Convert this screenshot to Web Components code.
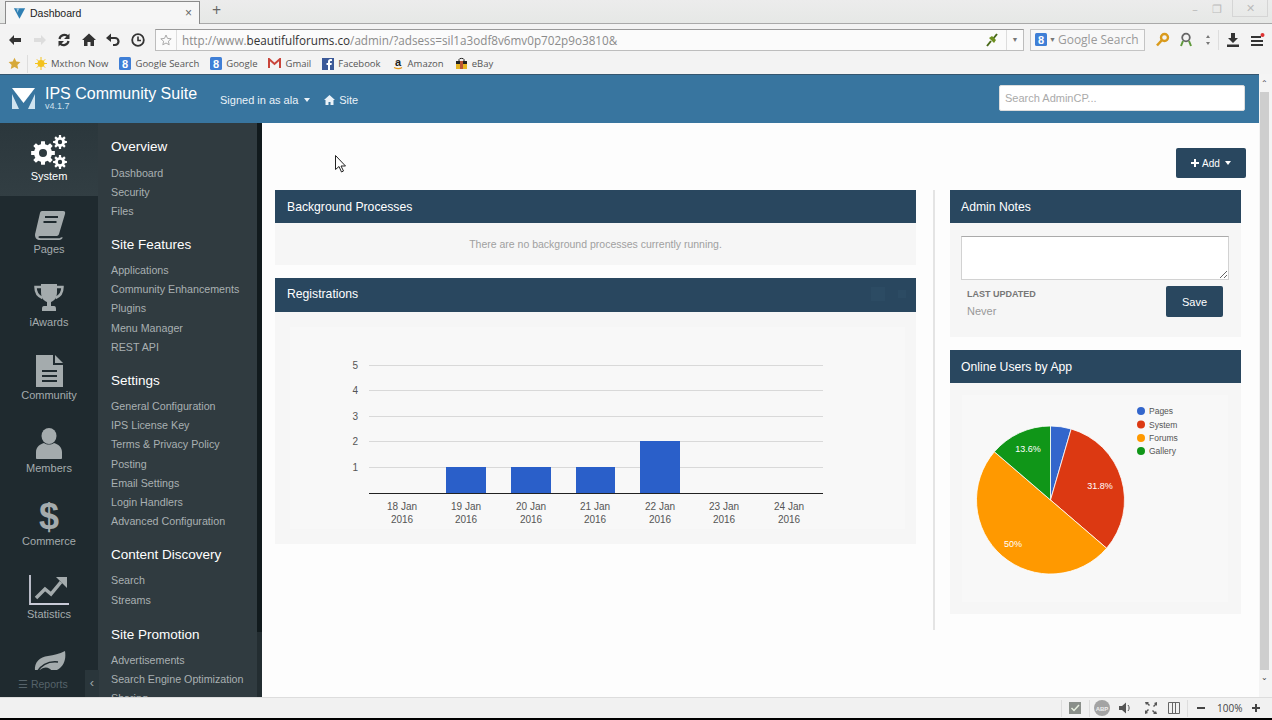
<!DOCTYPE html>
<html>
<head>
<meta charset="utf-8">
<title>Dashboard</title>
<style>
  html, body { margin: 0; height: 720px; overflow: hidden; background: #000; }
  body { display: flex; flex-direction: column; font-family: "Liberation Sans", Arial, sans-serif; }
</style>
</head>
<body>
<browser-chrome></browser-chrome>
<acp-shell>
  <acp-header slot="header"></acp-header>
  <acp-sidebar slot="sidebar"></acp-sidebar>
  <acp-dashboard></acp-dashboard>
</acp-shell>
<browser-status></browser-status>
<mouse-cursor></mouse-cursor>

<script>
function define(name, html) {
  const template = document.createElement('template');
  template.innerHTML = html;
  customElements.define(name, class extends HTMLElement {
    constructor() {
      super();
      this.attachShadow({ mode: 'open' });
      this.shadowRoot.appendChild(template.content.cloneNode(true));
    }
  });
}

function gearPath(cx, cy, outer, root, hole, teeth) {
  let d = '';
  const step = Math.PI * 2 / teeth;
  for (let i = 0; i < teeth; i++) {
    const a = i * step;
    const pts = [[root, a - step * .5], [root, a - step * .3], [outer, a - step * .2], [outer, a + step * .2], [root, a + step * .3]];
    pts.forEach((p, j) => {
      const x = (cx + p[0] * Math.cos(p[1])).toFixed(2);
      const y = (cy + p[0] * Math.sin(p[1])).toFixed(2);
      d += (i === 0 && j === 0 ? 'M' : 'L') + x + ' ' + y;
    });
  }
  d += `Z M${cx - hole} ${cy}a${hole} ${hole} 0 1 0 ${hole * 2} 0a${hole} ${hole} 0 1 0 ${-hole * 2} 0Z`;
  return d;
}

const gIcon = `<svg width="12" height="13" viewBox="0 0 12 13"><rect width="12" height="13" rx="1.5" fill="#3f7fd6"/><text x="6" y="10.5" font-size="11" font-weight="700" text-anchor="middle" fill="#fff" font-family="Liberation Sans">8</text></svg>`;

define('browser-chrome', `
<style>
  :host { display: block; height: 74px; flex: none; background: #f3f3f3; font-family: "Open Sans", sans-serif; color: #444; }
  svg { display: block; flex: none; }
  .tabs { height: 23px; display: flex; align-items: flex-end; background: linear-gradient(#ececec, #e6e8e6); border-bottom: 1px solid #a9a9a9; position: relative; }
  .tab { margin-left: 5px; width: 195px; height: 23px; box-sizing: border-box; border: 1px solid #8b8b8b; border-bottom: 0; background: #f6f6f6; display: flex; align-items: center; padding: 0 7px 0 7px; font: 10.5px "Liberation Sans", sans-serif; color: #222; margin-bottom: -1px; }
  .tab span { margin-left: 4px; flex: 1; }
  .tab b { font-weight: 400; font-size: 12px; color: #666; }
  .plus { margin-left: 12px; font-size: 16px; line-height: 20px; color: #666; height: 23px; }
  .win { margin-left: auto; display: flex; align-items: center; height: 17px; align-self: flex-start; color: #bbb; font-size: 11px; }
  .win i { font-style: normal; width: 22px; text-align: center; }
  .win .close { width: 36px; height: 17px; border: 1px solid #d5d5d5; border-top: 0; margin: 0 4px 0 4px; line-height: 15px; box-sizing: border-box; }
  .nav { height: 29px; padding-top: 2px; display: flex; align-items: center; box-sizing: border-box; }
  .nav .btns { width: 155px; display: flex; flex: none; padding-left: 7px; box-sizing: border-box; gap: 8.6px; }
  .addr { width: 869px; height: 22px; box-sizing: border-box; border: 1px solid #bdbdbd; border-top-color: #999; background: #fbfbfb; display: flex; align-items: center; font-size: 11.7px; color: #8b8b8b; }
  .addr .star { width: 20px; flex: none; border-right: 1px solid #ddd; height: 100%; display: flex; align-items: center; justify-content: center; }
  .addr .url { margin-left: 5px; flex: 1; white-space: nowrap; }
  .addr .url em { font-style: normal; color: #333; }
  .addr .plug { width: 28px; display: flex; justify-content: center; }
  .addr .drop { width: 16px; height: 100%; border-left: 1px solid #ddd; display: flex; align-items: center; justify-content: center; color: #777; font-size: 7px; }
  .search { margin-left: 6px; width: 115px; height: 22px; box-sizing: border-box; border: 1px solid #c4c4c4; background: #f8f8f8; display: flex; align-items: center; padding-left: 4px; color: #9a9a9a; font-size: 12px; white-space: nowrap; }
  .search .c { font-size: 7px; margin: 0 2px 0 2px; color: #777; }
  .tools { display: flex; align-items: center; margin-left: 9px; }
  .tools .sep { width: 1px; height: 20px; background: #ddd; margin: 0 6px 0 7px; }
  .marks { height: 21px; display: flex; align-items: center; font-size: 9.5px; color: #555; padding-left: 8px; box-sizing: border-box; }
  .marks .sep { width: 1px; height: 18px; background: #ddd; margin: 0 7px 0 6px; }
  .marks a { display: flex; align-items: center; gap: 4px; margin-right: 11px; white-space: nowrap; }
</style>
<div class="tabs">
  <div class="tab">
    <svg width="13" height="13" viewBox="0 0 15 14"><path d="M1 1h13L7.500 13z" fill="#2f7fb3"/><path d="M4 1h3.500L5 6z" fill="#9cc5de"/></svg>
    <span>Dashboard</span><b>×</b>
  </div>
  <div class="plus">+</div>
  <div class="win"><i>–</i><i>❐</i><i class="close">✕</i></div>
</div>
<div class="nav">
  <div class="btns">
    <svg width="16" height="16" viewBox="0 0 16 16"><path d="M2 8l5-5v3h7v4H7v3z" fill="#333"/></svg>
    <svg width="16" height="16" viewBox="0 0 16 16"><path d="M14 8L9 3v3H2v4h7v3z" fill="#ddd"/></svg>
    <svg width="16" height="16" viewBox="0 0 16 16"><path d="M3.500 7a5 5 0 0 1 8.500-2.500M12.500 9A5 5 0 0 1 4 11.500" fill="none" stroke="#333" stroke-width="2.200"/><path d="M13.500 1.500V7H8zM2.500 14.500V9H8z" fill="#333"/></svg>
    <svg width="16" height="16" viewBox="0 0 16 16"><path d="M8 1.500L1 8h2v6h3.500v-4h3v4H13V8h2z" fill="#333"/></svg>
    <svg width="16" height="16" viewBox="0 0 16 16"><path d="M4 6h6a3.500 3.500 0 0 1 0 7H8" fill="none" stroke="#333" stroke-width="2.200"/><path d="M6 1.500V10L1 6z" fill="#333"/></svg>
    <svg width="16" height="16" viewBox="0 0 16 16"><circle cx="8" cy="8" r="5.800" fill="none" stroke="#333" stroke-width="1.800"/><path d="M8 4.500V8.500H11" fill="none" stroke="#333" stroke-width="1.600"/></svg>
  </div>
  <div class="addr">
    <div class="star"><svg width="12" height="12" viewBox="0 0 12 12"><path d="M6 1l1.500 3.400 3.700.4-2.800 2.400.8 3.600L6 9l-3.200 1.800.8-3.600L.8 4.800l3.700-.4z" fill="none" stroke="#aaa"/></svg></div>
    <div class="url">http://www.<em>beautifulforums.co</em>/admin/?adsess=sil1a3odf8v6mv0p702p9o3810&amp;</div>
    <div class="plug"><svg width="14" height="14" viewBox="0 0 14 14"><path d="M2 13L6 8M8 6l4-5" stroke="#4a6a1a" stroke-width="2"/><path d="M4 5l5 5 2-3-4-4z" fill="#6d8f1f"/></svg></div>
    <div class="drop">▼</div>
  </div>
  <div class="search">${gIcon}<span class="c">▼</span>Google Search</div>
  <div class="tools">
    <svg width="16" height="16" viewBox="0 0 16 16" style="margin-right:8px"><circle cx="10.500" cy="5.500" r="3.500" fill="none" stroke="#d99a1c" stroke-width="2.400"/><path d="M8 8l-5 5.500" stroke="#d99a1c" stroke-width="2.600"/></svg>
    <svg width="16" height="16" viewBox="0 0 16 16" style="margin-right:11px"><circle cx="8" cy="5.500" r="3.800" fill="none" stroke="#666" stroke-width="1.800"/><path d="M5 9l-2 5M11 9l2 5" stroke="#5f9a3c" stroke-width="2"/></svg>
    <svg width="6" height="16" viewBox="0 0 6 16"><path d="M1 6h4L3 3zM1 10h4l-2 3z" fill="#777"/></svg>
    <span class="sep"></span>
    <svg width="16" height="16" viewBox="0 0 16 16" style="margin-right:8px"><path d="M6 1h4v5h3l-5 5-5-5h3zM2 12.500h12V15H2z" fill="#333"/></svg>
    <svg width="16" height="16" viewBox="0 0 16 16"><path d="M2 4h10v2H2zM2 8h12v2H2zM2 12h12v2H2z" fill="#333"/><circle cx="13.500" cy="3" r="2" fill="#d33"/></svg>
  </div>
</div>
<div class="marks">
  <svg width="13" height="13" viewBox="0 0 13 13"><path d="M6.500 .8l1.800 3.800 4.100.5-3 2.900.8 4.100-3.700-2-3.700 2 .8-4.100-3-2.900 4.100-.5z" fill="#d6a93a"/></svg>
  <span class="sep"></span>
  <a style="letter-spacing:.05px"><svg width="12" height="13" viewBox="0 0 12 13"><circle cx="6" cy="6.500" r="3.500" fill="#f3c21c"/><path d="M6 0v13M0 6.500h12M1.800 2.300l8.400 8.400M10.200 2.300l-8.400 8.400" stroke="#f3c21c"/></svg>Mxthon Now</a>
  <a>${gIcon}Google Search</a>
  <a>${gIcon}Google</a>
  <a><svg width="13" height="11" viewBox="0 0 13 11"><path d="M1 10V1l5.500 5L12 1v9" fill="none" stroke="#c9443a" stroke-width="2"/></svg>Gmail</a>
  <a><svg width="12" height="12" viewBox="0 0 12 12"><rect width="12" height="12" fill="#3b5998"/><path d="M8 12V7h1.500l.3-2H8V4c0-.6.2-1 1-1h1V1.200C9.500 1.100 9 1 8.500 1 7 1 6 2 6 3.600V5H4.500v2H6v5z" fill="#fff"/></svg>Facebook</a>
  <a><svg width="12" height="13" viewBox="0 0 12 13"><text x="6" y="9" font-size="11" font-weight="700" text-anchor="middle" fill="#222" font-family="Liberation Sans">a</text><path d="M2 10.500c3 1.500 6 1.500 8 0" stroke="#e59a1c" fill="none" stroke-width="1.200"/></svg>Amazon</a>
  <a><svg width="13" height="13" viewBox="0 0 13 13"><path d="M4 4V2.500C4 1 9 1 9 2.500V4" fill="none" stroke="#222"/><path d="M1 4h11v3H1z" fill="#222"/><path d="M1 7h11v5H1z" fill="#e6b422"/><path d="M5 4h3v8H5z" fill="#b53"/></svg>eBay</a>
</div>
`);

define('acp-shell', `
<style>
  :host { display: grid; grid-template-columns: 262px 997px 13px; grid-template-rows: 49px 574px; flex: none; height: 623px; overflow: hidden; }
  .h { grid-column: 1 / 3; display: block; }
  .s { min-height: 0; overflow: hidden; }
  .m { background: #fdfdfd; overflow: hidden; }
  .bar { grid-column: 3; grid-row: 1 / 3; background: #f4f4f4; display: flex; flex-direction: column; box-sizing: border-box; padding: 5px 3px 0 1px; font-size: 8px; line-height: 10px; color: #444; text-align: center; }
  .thumb { margin: 3px 0; height: 578px; background: #cecece; }
</style>
<div class="h"><slot name="header"></slot></div>
<div class="s"><slot name="sidebar"></slot></div>
<div class="m"><slot></slot></div>
<div class="bar"><span>⌃</span><div class="thumb"></div><span>⌄</span></div>
`);

define('acp-header', `
<style>
  :host { display: flex; align-items: center; height: 49px; box-sizing: border-box; background: #38759f; border-top: 1px solid #35566f; color: #fff; }
  .logo { margin-left: 12px; margin-top: -2px; width: 23px; flex: none; }
  .brand { margin-left: 10px; width: 175px; flex: none; position: relative; top: -1px; }
  .brand b { display: block; font-weight: 400; font-size: 16px; line-height: 17px; white-space: nowrap; margin-top: -1px; }
  .brand small { display: block; font-size: 9px; line-height: 9px; color: #cfe0ec; }
  .user { font-size: 11px; color: #eaf2f8; margin-top: 1px; display: flex; align-items: center; gap: 4px; white-space: nowrap; }
  .caret { border: 3.500px solid transparent; border-top: 4px solid #eaf2f8; border-bottom: 0; margin-left: 2px; }
  .link { margin-left: 14px; }
  input { margin-left: auto; margin-right: 14px; margin-top: -2px; width: 246px; height: 26px; box-sizing: border-box; border: 1px solid #ddd; background: #fff; padding: 0 5px; font: 11px "Liberation Sans", sans-serif; border-radius: 2px; }
  input::placeholder { color: #aaa; opacity: 1; }
</style>
<svg class="logo" width="23" height="23" viewBox="0 0 23 23"><path d="M0 1h23L11.500 16z" fill="#fff"/><path d="M0 7l7 15H0zM23 7l-7 15h7z" fill="#cfe3ef"/></svg>
<div class="brand"><b>IPS Community Suite</b><small>v4.1.7</small></div>
<div class="user">Signed in as ala <span class="caret"></span></div>
<div class="user link">
  <svg width="11" height="10" viewBox="0 0 11 10"><path d="M5.500 0L0 5h1.500v5h3V7h2v3h3V5H11z" fill="#eaf2f8"/></svg>Site
</div>
<input placeholder="Search AdminCP...">
`);

define('side-app', `
<style>
  :host { display: flex; flex-direction: column; align-items: center; height: 73px; box-sizing: border-box; padding-top: 12px; color: #a4abad; font-size: 11px; line-height: 14px; }
  :host([active]) { background: linear-gradient(#2b373c, #323e43); color: #fff; }
  ::slotted(svg) { display: block; width: 40px; height: 34px; }
  ::slotted(span) { display: block; height: 34px; font-size: 36px; line-height: 34px; font-weight: 700; }
</style>
<slot name="icon"></slot>
<slot></slot>
`);

define('menu-group', `
<style>
  :host { display: block; margin-bottom: 14px; }
  .head { font-size: 13.500px; line-height: 20px; color: #fff; padding-bottom: 6.500px; }
  ::slotted(a) { display: block; font-size: 10.700px; line-height: 19.100px; color: #a9b0b2; white-space: nowrap; }
</style>
<div class="head"><slot name="head"></slot></div>
<slot></slot>
`);

define('acp-sidebar', `
<style>
  :host { display: grid; grid-template-columns: 98px 159px 5px; height: 574px; overflow: hidden; position: relative; background: #303b40; }
  .apps { background: #1f2a2f; overflow: hidden; }
  .menu { padding: 14px 0 0 13px; overflow: hidden; }
  .rail { background: #232d31; }
  .rail div { height: 509px; background: #111a1d; }
  .foot { position: absolute; left: 0; bottom: 0; width: 98px; height: 27px; background: #1f2a2f; display: flex; align-items: center; font-size: 10.500px; color: #56636a; box-sizing: border-box; padding-left: 18px; gap: 3px; }
  .collapse { position: absolute; left: 85px; bottom: 0; width: 14px; height: 27px; background: #2a363b; color: #9aa4a8; font-size: 13px; line-height: 25px; text-align: center; }
</style>
<div class="apps">
  <side-app active>
    <svg slot="icon" viewBox="0 0 40 34"><path fill="#fff" fill-rule="evenodd" d="${gearPath(14, 18, 12, 9, 4, 8)}"/><path fill="#fff" fill-rule="evenodd" d="${gearPath(31, 7, 7, 5, 2.2, 8)}"/><path fill="#fff" fill-rule="evenodd" d="${gearPath(31, 27, 7, 5, 2.2, 8)}"/></svg>
    System
  </side-app>
  <side-app>
    <svg slot="icon" viewBox="0 0 40 34"><path fill="#a4abad" d="M13 3h21c2 0 2.500 1 2 3l-6 20c-.5 1.500-1.500 2-3 2H12c-2 0-3 .6-2.500 1.400.3.500 1 .8 2 .8h19c1 0 1.800-.4 2.200-1.200l1 .6c-.4 1.500-1.800 2.400-3.500 2.400H11c-3 0-5-2-5-5 0-1 .2-1.500.4-2.200L11 5c.3-1.200 1-2 2-2z"/><path d="M16 9h13M14.500 14h13" stroke="#1f2a2f" stroke-width="2"/></svg>
    Pages
  </side-app>
  <side-app>
    <svg slot="icon" viewBox="0 0 40 34"><path fill="#a4abad" d="M12 3h16v8c0 6-3 9-6 10v4h3c1.500 0 2 1 2 3v2H13v-2c0-2 .5-3 2-3h3v-4c-3-1-6-4-6-10z"/><path fill="none" stroke="#a4abad" stroke-width="2.500" d="M12 6H6.500c0 6 2 9 7 11M28 6h5.500c0 6-2 9-7 11"/></svg>
    iAwards
  </side-app>
  <side-app>
    <svg slot="icon" viewBox="0 0 40 34"><path fill="#a4abad" d="M7 1h17v10h10v22H7z"/><path fill="#a4abad" d="M26 1l8 8h-8z"/><path d="M13 17h15M13 22h15M13 27h15" stroke="#1f2a2f" stroke-width="2"/></svg>
    Community
  </side-app>
  <side-app>
    <svg slot="icon" viewBox="0 0 40 34"><ellipse cx="20" cy="9" rx="7.500" ry="8" fill="#a4abad"/><path fill="#a4abad" d="M7 31v-6c0-5 4-8 8-9 3 2 7 2 10 0 4 1 8 4 8 9v6c0 .6-.5 1-1 1H8c-.5 0-1-.4-1-1z"/></svg>
    Members
  </side-app>
  <side-app>
    <span slot="icon">$</span>
    Commerce
  </side-app>
  <side-app>
    <svg slot="icon" viewBox="0 0 40 34"><path d="M1 2v29h39" fill="none" stroke="#c9cbd8" stroke-width="1.800"/><path d="M7 25l9-9 6 5 10-12" fill="none" stroke="#a4abad" stroke-width="3.500"/><path d="M27 4h11v11z" fill="#a4abad"/></svg>
    Statistics
  </side-app>
  <side-app>
    <svg slot="icon" viewBox="0 0 40 34"><path fill="#a4abad" d="M6 25c-1-9 5-14 13-15 6-1 11-2 17-5 1 6 0 12-4 16-3 3-6 4-9 4-3-4-8-5-13 0z"/><path d="M8 26c5-8 12-11 21-10" fill="none" stroke="#1f2a2f" stroke-width="1.500"/></svg>
  </side-app>
</div>
<div class="menu">
  <menu-group><span slot="head">Overview</span><a>Dashboard</a><a>Security</a><a>Files</a></menu-group>
  <menu-group><span slot="head">Site Features</span><a>Applications</a><a>Community Enhancements</a><a>Plugins</a><a>Menu Manager</a><a>REST API</a></menu-group>
  <menu-group><span slot="head">Settings</span><a>General Configuration</a><a>IPS License Key</a><a>Terms &amp; Privacy Policy</a><a>Posting</a><a>Email Settings</a><a>Login Handlers</a><a>Advanced Configuration</a></menu-group>
  <menu-group><span slot="head">Content Discovery</span><a>Search</a><a>Streams</a></menu-group>
  <menu-group style="margin-top:15px"><span slot="head">Site Promotion</span><a>Advertisements</a><a>Search Engine Optimization</a><a>Sharing</a></menu-group>
</div>
<div class="rail"><div></div></div>
<div class="foot">☰ Reports</div>
<div class="collapse">‹</div>
`);

define('acp-panel', `
<style>
  :host { display: block; margin-bottom: 13px; }
  .head { height: var(--head, 33px); box-sizing: border-box; background: #29475f; color: #fff; font-size: 12.200px; display: flex; align-items: center; padding: 0 var(--pad, 12px) var(--nudge, 0); justify-content: space-between; }
  .body { background: #f6f6f6; }
  ::slotted(svg) { display: block; }
</style>
<div class="head"><slot name="title"></slot><slot name="tools"></slot></div>
<div class="body"><slot></slot></div>
`);

define('reg-chart', `
<style>
  :host { display: block; height: 232px; }
  svg { display: block; font-family: "Liberation Sans", sans-serif; font-size: 10px; fill: #555; }
  .grid { stroke: #d9d9d9; }
</style>
<svg width="641" height="232" viewBox="275 312 641 232">
  <rect x="290" y="327" width="615" height="202" fill="#f8f8f8"/>
  <path class="grid" d="M369 365.500h454M369 390.500h454M369 416.500h454M369 441.500h454M369 467.500h454"/>
  <rect x="446" y="467" width="40" height="26" fill="#2a5fc9"/>
  <rect x="511" y="467" width="40" height="26" fill="#2a5fc9"/>
  <rect x="576" y="467" width="39" height="26" fill="#2a5fc9"/>
  <rect x="640" y="441" width="40" height="52" fill="#2a5fc9"/>
  <path d="M369 493.500h454" stroke="#222"/>
  <g text-anchor="end"><text x="358" y="369">5</text><text x="358" y="394">4</text><text x="358" y="420">3</text><text x="358" y="445">2</text><text x="358" y="471">1</text></g>
  <g text-anchor="middle">
    <text x="402" y="510">18 Jan</text><text x="402" y="523">2016</text>
    <text x="466" y="510">19 Jan</text><text x="466" y="523">2016</text>
    <text x="531" y="510">20 Jan</text><text x="531" y="523">2016</text>
    <text x="595" y="510">21 Jan</text><text x="595" y="523">2016</text>
    <text x="660" y="510">22 Jan</text><text x="660" y="523">2016</text>
    <text x="724" y="510">23 Jan</text><text x="724" y="523">2016</text>
    <text x="789" y="510">24 Jan</text><text x="789" y="523">2016</text>
  </g>
</svg>
`);

function pieSlices() {
  const cx = 1050.5, cy = 500, r = 74;
  const parts = [[.045, '#3366cc'], [.318, '#dc3912'], [.5, '#ff9900'], [.137, '#109618']];
  let start = 0, out = '';
  parts.forEach(([share, color]) => {
    const a0 = start * Math.PI * 2, a1 = (start + share) * Math.PI * 2;
    const x0 = cx + r * Math.sin(a0), y0 = cy - r * Math.cos(a0);
    const x1 = cx + r * Math.sin(a1), y1 = cy - r * Math.cos(a1);
    out += `<path d="M${cx} ${cy}L${x0.toFixed(2)} ${y0.toFixed(2)}A${r} ${r} 0 ${share > .5 ? 1 : 0} 1 ${x1.toFixed(2)} ${y1.toFixed(2)}Z" fill="${color}" stroke="#fff" stroke-width=".8"/>`;
    start += share;
  });
  return out;
}

define('online-pie', `
<style>
  :host { display: block; height: 231px; }
  svg { display: block; font-family: "Liberation Sans", sans-serif; font-size: 9px; }
  .l { fill: #555; font-size: 8.500px; }
  .p { fill: #fff; text-anchor: middle; }
</style>
<svg width="291" height="231" viewBox="950 383 291 231">
  <rect x="962" y="395" width="266" height="207" fill="#f8f8f8"/>
  ${pieSlices()}
  <text class="p" x="1028" y="452">13.6%</text>
  <text class="p" x="1100" y="489">31.8%</text>
  <text class="p" x="1013" y="547">50%</text>
  <circle cx="1141" cy="411" r="4" fill="#3366cc"/><text class="l" x="1149" y="414">Pages</text>
  <circle cx="1141" cy="424.500" r="4" fill="#dc3912"/><text class="l" x="1149" y="427.500">System</text>
  <circle cx="1141" cy="438" r="4" fill="#ff9900"/><text class="l" x="1149" y="441">Forums</text>
  <circle cx="1141" cy="451" r="4" fill="#109618"/><text class="l" x="1149" y="454">Gallery</text>
</svg>
`);

define('admin-notes', `
<style>
  :host { display: block; height: 114px; box-sizing: border-box; padding: 13px 12px 0 11px; font-family: "Liberation Sans", sans-serif; }
  textarea { display: block; width: 100%; height: 44px; box-sizing: border-box; border: 1px solid #d2d2d2; border-top-color: #aaa; background: #fff; margin: 0; }
  .row { display: flex; justify-content: space-between; margin: 6px 6px 0 6px; }
  h4 { margin: 2px 0 0; font-size: 9px; line-height: 12px; color: #777; font-weight: 700; }
  p { margin: 5px 0 0; font-size: 11px; line-height: 13px; color: #999; }
  button { width: 57px; height: 31px; background: #29475f; color: #fff; border: 0; border-radius: 2px; font: 11px "Liberation Sans", sans-serif; }
</style>
<textarea></textarea>
<div class="row">
  <div><h4>LAST UPDATED</h4><p>Never</p></div>
  <button>Save</button>
</div>
`);

define('acp-dashboard', `
<style>
  :host { display: block; padding: 25px 13px 0 13px; height: 574px; box-sizing: border-box; overflow: hidden; }
  .top { display: flex; justify-content: flex-end; height: 42px; }
  .add { width: 70px; height: 30px; background: #29475f; color: #fff; border: 0; border-radius: 2px; font: 10px "Liberation Sans", sans-serif; display: flex; align-items: center; justify-content: center; gap: 3px; padding: 0; }
  .caret { border: 3.500px solid transparent; border-top: 4px solid #fff; border-bottom: 0; margin-left: 2px; }
  .cols { display: grid; grid-template-columns: 641px 308px; column-gap: 17px; align-items: start; }
  .right { border-left: 2px solid #e4e4e4; padding-left: 15px; height: 440px; }
  .msg { height: 42px; display: flex; align-items: center; justify-content: center; color: #a0a0a0; font-size: 10.500px; }
  .reg { --head: 34px; --nudge: 2px; }
  .tools { display: flex; gap: 13px; margin-right: -2px; align-items: center; }
  .tools i { display: block; width: 14px; height: 14px; background: #2c4b63; }
  .tools i + i { width: 8px; height: 8px; }
</style>
<div class="top"><button class="add">
  <svg width="8" height="8" viewBox="0 0 8 8"><path d="M3 0h2v3h3v2H5v3H3V5H0V3h3z" fill="#fff"/></svg>Add<span class="caret"></span>
</button></div>
<div class="cols">
  <div>
    <acp-panel><span slot="title">Background Processes</span><div class="msg">There are no background processes currently running.</div></acp-panel>
    <acp-panel class="reg"><span slot="title">Registrations</span><span slot="tools" class="tools"><i></i><i></i></span><reg-chart></reg-chart></acp-panel>
  </div>
  <div class="right">
    <acp-panel style="--pad:11px"><span slot="title">Admin Notes</span><admin-notes></admin-notes></acp-panel>
    <acp-panel style="--pad:11px"><span slot="title">Online Users by App</span><online-pie></online-pie></acp-panel>
  </div>
</div>
`);

define('browser-status', `
<style>
  :host { display: flex; flex: none; height: 21px; box-sizing: border-box; background: #f1f1f1; border-top: 1px solid #ddd; align-items: center; justify-content: flex-end; font-family: "Open Sans", sans-serif; font-size: 10px; color: #444; padding-right: 12px; }
  svg { display: block; flex: none; }
  .sep { width: 1px; height: 17px; background: #ddd; }
  .pct { margin: 0 9.500px 0 12px; }
</style>
<span class="sep" style="margin-right:7px"></span>
<svg width="12" height="12" viewBox="0 0 12 12" style="margin-right:8px"><rect width="12" height="12" fill="#8a8f8a"/><path d="M2.500 6l2.500 2.500L10 3" fill="none" stroke="#e8f0e0" stroke-width="1.500"/></svg>
<span class="sep" style="margin-right:4px"></span>
<svg width="16" height="16" viewBox="0 0 16 16" style="margin-right:9px"><circle cx="8" cy="8" r="8" fill="#a3a3a3"/><text x="8" y="10.500" font-size="6" font-weight="700" text-anchor="middle" fill="#eee" font-family="Liberation Sans">ABP</text></svg>
<svg width="12" height="12" viewBox="0 0 12 12" style="margin-right:14px"><path d="M0 4h3l4-3.500v11L3 8H0z" fill="#555"/><path d="M9 3c1.500 2 1.500 4 0 6" fill="none" stroke="#555"/></svg>
<svg width="12" height="12" viewBox="0 0 12 12" style="margin-right:11px"><path d="M0 0h4L3 1l2 2-1 1-2-2-1 1zM12 0v4l-1-1-2 2-1-1 2-2-1-1zM0 12V8l1 1 2-2 1 1-2 2 1 1zM12 12H8l1-1-2-2 1-1 2 2 1-1z" fill="#555"/></svg>
<svg width="12" height="12" viewBox="0 0 12 12"><path d="M.5.500h11v11H.5zM4.500.500v11M7.500.500v11" fill="none" stroke="#666"/></svg>
<span class="sep" style="margin-left:7px;margin-right:9px"></span>
<svg width="8" height="8" viewBox="0 0 8 8"><path d="M0 3h8v2H0z" fill="#444"/></svg>
<span class="pct">100%</span>
<svg width="8" height="8" viewBox="0 0 8 8"><path d="M3 0h2v3h3v2H5v3H3V5H0V3h3z" fill="#444"/></svg>
`);

define('mouse-cursor', `
<style>
  :host { position: absolute; left: 335px; top: 155px; display: block; }
  svg { display: block; }
</style>
<svg width="11" height="18" viewBox="0 0 11 18"><path d="M.5.500v14l3.500-3 2.500 5.500 2-1-2.500-5h4.500z" fill="#fff" stroke="#222"/></svg>
`);
</script>
</body>
</html>
